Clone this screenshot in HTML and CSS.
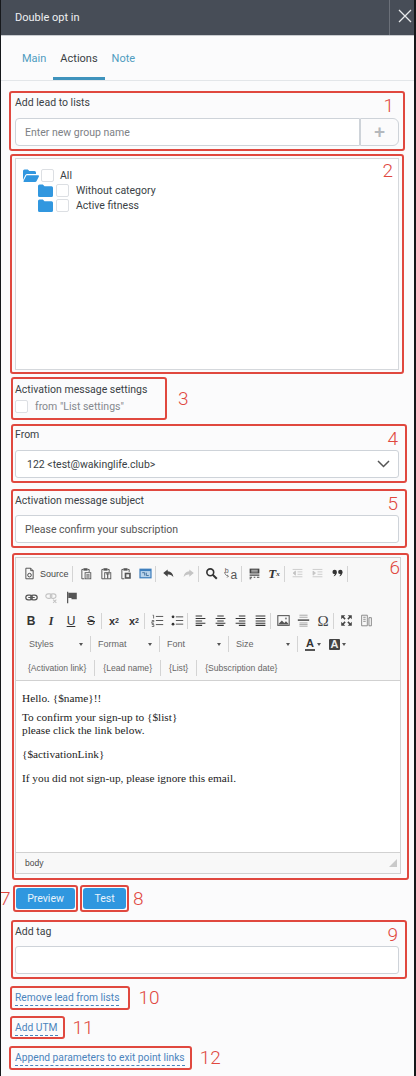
FILE: index.html
```html
<!DOCTYPE html>
<html lang="en">
<head>
    <meta charset="UTF-8">
    <meta name="viewport" content="width=device-width, initial-scale=1.0">
    <title>Double opt in</title>
    <link rel="stylesheet" href="styles.css">
</head>
<body>
    <svg class="sprite" width="0" height="0">
        <symbol id="i-source" viewBox="0 0 16 16"><path d="M3.5 1.5h6l3 3v10h-9z M9.5 1.5v3h3" fill="none" stroke="#444" stroke-width="1.1"/><circle cx="8" cy="10" r="2.2" fill="none" stroke="#444" stroke-width="1.2"/></symbol>
        <symbol id="i-paste" viewBox="0 0 16 16"><path d="M3.5 3h2M10.5 3h2v3M3.5 3v11.5h3" fill="none" stroke="#555" stroke-width="1.2"/><rect x="5.5" y="1.5" width="5" height="3" fill="#555"/><rect x="7.5" y="7" width="7" height="7.5" fill="none" stroke="#555" stroke-width="1.1"/><path d="M9 9.5h4M9 11h4M9 12.5h4" stroke="#555"/></symbol>
        <symbol id="i-paste2" viewBox="0 0 16 16"><path d="M3.5 3h2M10.5 3h2v3M3.5 3v11.5h3" fill="none" stroke="#555" stroke-width="1.2"/><rect x="5.5" y="1.5" width="5" height="3" fill="#555"/><rect x="7" y="7" width="7.5" height="7.5" fill="none" stroke="#555" stroke-width="1.1"/><path d="M10.7 8v6" stroke="#555" stroke-width="1.4"/><path d="M8.5 8.5h4.500" stroke="#555" stroke-width="1.200"/></symbol>
        <symbol id="i-paste3" viewBox="0 0 16 16"><path d="M3.5 3h2M10.5 3h2v3M3.500 3v11.500h3" fill="none" stroke="#555" stroke-width="1.2"/><rect x="5.5" y="1.5" width="5" height="3" fill="#555"/><rect x="7" y="7" width="7.5" height="7.500" fill="#555"/><rect x="9" y="9" width="3.500" height="3.500" fill="#eee"/></symbol>
        <symbol id="i-preview" viewBox="0 0 16 16"><rect x="0.500" y="2" width="15" height="12" fill="#3f7fbd"/><rect x="2" y="5" width="12" height="7.500" fill="#b9d3ea"/><path d="M4 7h3v3.500M9 7v3.500h3" fill="none" stroke="#2f5f8f"/></symbol>
        <symbol id="i-undo" viewBox="0 0 16 16"><path d="M7 3L1.500 7.500 7 12V9.200c3-.3 5.300.6 7 3.300-.3-4-2.800-6.800-7-7.200z" fill="#444"/></symbol>
        <symbol id="i-redo" viewBox="0 0 16 16"><path d="M9 3l5.500 4.500L9 12V9.200c-3-.3-5.300.6-7 3.300.3-4 2.800-6.800 7-7.200z" fill="#c4c4c4"/></symbol>
        <symbol id="i-search" viewBox="0 0 16 16"><circle cx="6.500" cy="6.500" r="4.200" fill="none" stroke="#333" stroke-width="2"/><path d="M9.500 9.500l5 5" stroke="#333" stroke-width="2.400"/></symbol>
        <symbol id="i-replace" viewBox="0 0 16 16"><path d="M2 5c.3 3 2 4.500 4.500 5M5 8.500l1.700 1.500L5 11.800" fill="none" stroke="#666"/></symbol>
        <symbol id="i-blocks" viewBox="0 0 16 16"><path d="M2 2h12v6H2z" fill="#444"/><path d="M2 10h12M2 12.500h3M7 12.500h2M11 12.500h3M2 14.500h2" stroke="#444" stroke-width="1.300"/><path d="M4 4h8M4 6h8" stroke="#ddd"/></symbol>
        <symbol id="i-outdent" viewBox="0 0 16 16"><path d="M2 3h12M8 6h6M8 9h6M2 12h12M5.500 5v5L2.500 7.500z" stroke="#c4c4c4" fill="#c4c4c4"/></symbol>
        <symbol id="i-indent" viewBox="0 0 16 16"><path d="M2 3h12M8 6h6M8 9h6M2 12h12M2.500 5v5l3-2.500z" stroke="#c4c4c4" fill="#c4c4c4"/></symbol>
        <symbol id="i-quote" viewBox="0 0 16 16"><circle cx="4.500" cy="6" r="2.700" fill="#333"/><path d="M7 6c0 3-1.500 5-4 5.500C4.500 10 5 8.500 5 7z" fill="#333"/><circle cx="11.500" cy="6" r="2.700" fill="#333"/><path d="M14 6c0 3-1.500 5-4 5.500 1.500-1.500 2-3 2-4.500z" fill="#333"/></symbol>
        <symbol id="i-link" viewBox="0 0 16 16"><rect x="1" y="5" width="8" height="6" rx="3" fill="none" stroke="#555" stroke-width="1.500"/><rect x="7" y="5" width="8" height="6" rx="3" fill="none" stroke="#555" stroke-width="1.500"/><path d="M4 8h8" stroke="#555" stroke-width="1.200"/></symbol>
        <symbol id="i-unlink" viewBox="0 0 16 16"><rect x="1" y="3.500" width="7.500" height="5.500" rx="2.700" fill="none" stroke="#c4c4c4" stroke-width="1.400"/><rect x="6.500" y="3.500" width="7" height="5.500" rx="2.700" fill="none" stroke="#c4c4c4" stroke-width="1.400"/><path d="M10 10.500l4 4M14 10.500l-4 4" stroke="#c4c4c4" stroke-width="1.300"/></symbol>
        <symbol id="i-flag" viewBox="0 0 16 16"><path d="M2.500 1h1.500v14H2.500z" fill="#555"/><path d="M4 2h10.500v8H8V8.500H4z" fill="#555"/></symbol>
        <symbol id="i-ol" viewBox="0 0 16 16"><path d="M6 3h9M6 8h9M6 13h9" stroke="#555" stroke-width="1.200"/><path d="M2 1.500h1.200v4M1 8h2.500v1.500H1v2h2.500M1 13h2.500v2.500H1" fill="none" stroke="#555"/></symbol>
        <symbol id="i-ul" viewBox="0 0 16 16"><path d="M6 3.500h9M6 8h9M6 12.500h9" stroke="#555" stroke-width="1.200"/><circle cx="2.500" cy="3.500" r="1.700" fill="#333"/><circle cx="2.500" cy="12.500" r="1.700" fill="#333"/></symbol>
        <symbol id="i-left" viewBox="0 0 16 16"><path d="M2 2.500h8M2 5.500h12M2 8.500h8M2 11.500h12M2 14h8" stroke="#333" stroke-width="1.300"/></symbol>
        <symbol id="i-center" viewBox="0 0 16 16"><path d="M4 2.500h8M2 5.500h12M4 8.500h8M2 11.500h12M4 14h8" stroke="#333" stroke-width="1.300"/></symbol>
        <symbol id="i-right" viewBox="0 0 16 16"><path d="M6 2.500h8M2 5.500h12M6 8.500h8M2 11.500h12M6 14h8" stroke="#333" stroke-width="1.300"/></symbol>
        <symbol id="i-justify" viewBox="0 0 16 16"><path d="M2 2.500h12M2 5.500h12M2 8.500h12M2 11.500h12M2 14h12" stroke="#333" stroke-width="1.300"/></symbol>
        <symbol id="i-image" viewBox="0 0 16 16"><rect x="1" y="2" width="14" height="12" fill="none" stroke="#555" stroke-width="1.300"/><path d="M2 12l4-4 3 3 2-2 3 3v1H2z" fill="#555"/><circle cx="11" cy="5.500" r="1.300" fill="#888"/></symbol>
        <symbol id="i-hr" viewBox="0 0 16 16"><path d="M3 1.500h10M3 4h10" stroke="#999"/><path d="M1 7.500h14" stroke="#333" stroke-width="1.600"/><path d="M3 11h10M3 13h10M3 15h10" stroke="#999"/></symbol>
        <symbol id="i-max" viewBox="0 0 16 16"><path d="M1.500 1.500h5l-1.800 1.800 2.300 2.300-1.400 1.400-2.300-2.300-1.800 1.800zM14.500 1.500v5l-1.800-1.800-2.300 2.300-1.400-1.400 2.300-2.300-1.800-1.800zM1.500 14.500v-5l1.800 1.800 2.300-2.300 1.400 1.400-2.300 2.300 1.800 1.800zM14.500 14.500h-5l1.800-1.800-2.300-2.300 1.400-1.400 2.300 2.300 1.800-1.800z" fill="#444"/></symbol>
        <symbol id="i-show" viewBox="0 0 16 16"><path d="M2 1.500h7v13H2zM11 4.500h3v10h-3z" fill="none" stroke="#777"/><path d="M4 4h3M4 6.500h3M4 9h3" stroke="#777"/></symbol>
        <symbol id="i-folder" viewBox="0 0 15 13"><path d="M0 2a1.500 1.500 0 0 1 1.500-1.500h3.300L6.500 2.300h7A1.500 1.500 0 0 1 15 3.800v7.700a1.500 1.500 0 0 1-1.500 1.500h-12A1.500 1.500 0 0 1 0 11.500z" fill="#3197df"/></symbol>
        <symbol id="i-folder-open" viewBox="0 0 16 13"><path d="M0 2a1.500 1.500 0 0 1 1.500-1.500h3.300L6.300 2h5.200A1.500 1.500 0 0 1 13 3.500V5H4.200a2 2 0 0 0-1.800 1.100L0 11z" fill="#3197df"/><path d="M3.500 6.300h11.700c.6 0 1 .6.700 1.100l-2.400 4.800a1.500 1.500 0 0 1-1.300.8H1.200c-.6 0-1-.6-.7-1.100z" fill="#3197df"/></symbol>
    </svg>

    <div class="header">
        <div class="header-title">Double opt in</div>
        <button class="close-btn" aria-label="Close">
            <svg width="14" height="14" viewBox="0 0 14 14"><path d="M1 1l12 12M13 1L1 13" stroke="#e8eaec" stroke-width="1.300"/></svg>
        </button>
    </div>

    <div class="tabs">
        <a class="tab">Main</a>
        <a class="tab active">Actions</a>
        <a class="tab">Note</a>
    </div>

    <div class="box box-lists">
        <span class="num">1</span>
        <label class="field-label">Add lead to lists</label>
        <div class="input-group">
            <input class="input" type="text" placeholder="Enter new group name">
            <button class="add-btn">+</button>
        </div>
    </div>

    <div class="box box-tree">
        <span class="num">2</span>
        <div class="tree">
            <div class="tree-row top">
                <svg class="folder-open"><use href="#i-folder-open"/></svg>
                <span class="check"></span>
                <span class="tree-name">All</span>
            </div>
            <div class="tree-row child">
                <svg class="folder"><use href="#i-folder"/></svg>
                <span class="check"></span>
                <span class="tree-name">Without category</span>
            </div>
            <div class="tree-row child">
                <svg class="folder"><use href="#i-folder"/></svg>
                <span class="check"></span>
                <span class="tree-name">Active fitness</span>
            </div>
        </div>
    </div>

    <div class="row-noted row-settings">
        <div class="box box-settings">
            <div class="settings-label">Activation message settings</div>
            <div class="settings-check">
                <span class="check"></span>
                <span class="settings-text">from "List settings"</span>
            </div>
        </div>
        <span class="num-side">3</span>
    </div>

    <div class="box box-field box-from">
        <span class="num">4</span>
        <label class="field-label">From</label>
        <div class="select">
            <span>122 &lt;test@wakinglife.club&gt;</span>
            <svg width="13" height="8" viewBox="0 0 13 8"><path d="M1 1l5.500 5.500L12 1" fill="none" stroke="#555" stroke-width="1.500"/></svg>
        </div>
    </div>

    <div class="box box-field box-subject">
        <span class="num">5</span>
        <label class="field-label">Activation message subject</label>
        <input class="input single" type="text" value="Please confirm your subscription">
    </div>

    <div class="box box-editor">
        <span class="num">6</span>
        <div class="editor">
            <div class="toolbar">
                <div class="tool-row">
                    <span class="tool source"><svg><use href="#i-source"/></svg><span>Source</span></span>
                    <i class="sep"></i>
                    <span class="tool"><svg><use href="#i-paste"/></svg></span>
                    <span class="tool"><svg><use href="#i-paste2"/></svg></span>
                    <span class="tool"><svg><use href="#i-paste3"/></svg></span>
                    <span class="tool"><svg><use href="#i-preview"/></svg></span>
                    <i class="sep"></i>
                    <span class="tool"><svg><use href="#i-undo"/></svg></span>
                    <span class="tool"><svg><use href="#i-redo"/></svg></span>
                    <i class="sep"></i>
                    <span class="tool"><svg><use href="#i-search"/></svg></span>
                    <span class="tool replace"><svg><use href="#i-replace"/></svg><sup>b</sup><span>a</span></span>
                    <i class="sep"></i>
                    <span class="tool"><svg><use href="#i-blocks"/></svg></span>
                    <span class="tool clear">T<sub>x</sub></span>
                    <i class="sep"></i>
                    <span class="tool"><svg><use href="#i-outdent"/></svg></span>
                    <span class="tool"><svg><use href="#i-indent"/></svg></span>
                    <span class="tool"><svg><use href="#i-quote"/></svg></span>
                    <i class="sep"></i>
                </div>
                <div class="tool-row">
                    <span class="tool"><svg><use href="#i-link"/></svg></span>
                    <span class="tool"><svg><use href="#i-unlink"/></svg></span>
                    <span class="tool"><svg><use href="#i-flag"/></svg></span>
                </div>
                <div class="tool-row">
                    <span class="tool fmt bold">B</span>
                    <span class="tool fmt italic">I</span>
                    <span class="tool fmt under">U</span>
                    <span class="tool fmt strike">S</span>
                    <i class="sep"></i>
                    <span class="tool fmt script">x<sub>2</sub></span>
                    <span class="tool fmt script">x<sup>2</sup></span>
                    <i class="sep"></i>
                    <span class="tool"><svg><use href="#i-ol"/></svg></span>
                    <span class="tool"><svg><use href="#i-ul"/></svg></span>
                    <i class="sep"></i>
                    <span class="tool"><svg><use href="#i-left"/></svg></span>
                    <span class="tool"><svg><use href="#i-center"/></svg></span>
                    <span class="tool"><svg><use href="#i-right"/></svg></span>
                    <span class="tool"><svg><use href="#i-justify"/></svg></span>
                    <i class="sep"></i>
                    <span class="tool"><svg><use href="#i-image"/></svg></span>
                    <span class="tool"><svg><use href="#i-hr"/></svg></span>
                    <span class="tool omega">&Omega;</span>
                    <i class="sep"></i>
                    <span class="tool"><svg><use href="#i-max"/></svg></span>
                    <span class="tool"><svg><use href="#i-show"/></svg></span>
                </div>
                <div class="tool-row combos">
                    <span class="combo"><span>Styles</span><b class="caret"></b></span>
                    <i class="sep"></i>
                    <span class="combo"><span>Format</span><b class="caret"></b></span>
                    <i class="sep"></i>
                    <span class="combo"><span>Font</span><b class="caret"></b></span>
                    <i class="sep"></i>
                    <span class="combo"><span>Size</span><b class="caret"></b></span>
                    <i class="sep"></i>
                    <span class="color-btn"><span class="text-color">A</span><b class="caret"></b></span>
                    <span class="color-btn"><span class="bg-color">A</span><b class="caret"></b></span>
                </div>
                <div class="tool-row vars">
                    <span>{Activation link}</span>
                    <i class="sep"></i>
                    <span>{Lead name}</span>
                    <i class="sep"></i>
                    <span>{List}</span>
                    <i class="sep"></i>
                    <span>{Subscription date}</span>
                </div>
            </div>
            <div class="editor-body">
                <p>Hello. {$name}!!</p>
                <p>To confirm your sign-up to {$list}<br>please click the link below.</p>
                <p class="gap">{$activationLink}</p>
                <p class="gap">If you did not sign-up, please ignore this email.</p>
            </div>
            <div class="editor-foot">
                <span>body</span>
                <svg width="8" height="8" viewBox="0 0 8 8"><path d="M8 0v8H0z" fill="#c9c9c9"/></svg>
            </div>
        </div>
    </div>

    <div class="row-noted row-buttons">
        <span class="num-side num-seven">7</span>
        <div class="box box-btn box-preview"><button class="btn">Preview</button></div>
        <div class="box box-btn box-test"><button class="btn">Test</button></div>
        <span class="num-side">8</span>
    </div>

    <div class="box box-field box-tag">
        <span class="num">9</span>
        <label class="field-label">Add tag</label>
        <input class="input single" type="text">
    </div>

    <div class="row-noted row-link row-remove">
        <div class="box box-link"><a class="dash-link">Remove lead from lists</a></div>
        <span class="num-side">10</span>
    </div>
    <div class="row-noted row-link row-utm">
        <div class="box box-link"><a class="dash-link">Add UTM</a></div>
        <span class="num-side">11</span>
    </div>
    <div class="row-noted row-link row-append">
        <div class="box box-link"><a class="dash-link">Append parameters to exit point links</a></div>
        <span class="num-side">12</span>
    </div>
</body>
</html>
```

FILE: styles.css
```css
* {
    box-sizing: border-box;
}
body {
    margin: 0;
    width: 416px;
    height: 1076px;
    overflow: hidden;
    border-left: 1px solid #16181b;
    border-right: 2px solid #16181b;
    background-color: #fbfbfc;
    color: #3a3f45;
    font-family: Roboto, 'Open Sans', sans-serif;
    font-size: 10.5px;
}
.sprite {
    position: absolute;
}

/* header */
.header {
    display: flex;
    justify-content: space-between;
    height: 36px;
    background-color: #474d57;
    border-bottom: 1px solid #c9ccd0;
}
.header-title {
    padding-left: 14px;
    line-height: 35px;
    font-size: 11px;
    color: #eef0f2;
}
.close-btn {
    width: 25px;
    padding: 0 0 0 5px;
    background: none;
    border: none;
    border-left: 1px solid #6b7079;
}

/* tabs */
.tabs {
    display: flex;
    height: 45px;
    padding-left: 14px;
    border-bottom: 1px solid #e3e6e9;
}
.tab {
    padding: 16px 7px 0;
    font-size: 11px;
    color: #4f9cc0;
}
.tab.active {
    color: #3a3f45;
    border-bottom: 3px solid #3f93bd;
}

/* numbered boxes */
.box {
    position: relative;
    border: 2px solid #e0483f;
    border-radius: 3px;
}
.num {
    position: absolute;
    top: 3px;
    right: 7px;
    color: #e0483f;
    font-size: 19px;
    font-weight: 300;
    line-height: 20px;
}
.box-lists .num {
    right: 9px;
}
.box-tree .num {
    top: 5px;
    right: 9px;
}
.num-side {
    color: #e0483f;
    font-size: 19px;
    font-weight: 300;
    line-height: 20px;
}
.field-label {
    display: block;
    height: 24px;
    line-height: 18px;
    color: #3a3f45;
}
.input {
    flex: 1;
    min-width: 0;
    height: 28px;
    padding: 0 9px;
    background-color: #fff;
    border: 1px solid #ced3d9;
    border-radius: 4px 0 0 4px;
    font: inherit;
    color: #555;
}
.input::placeholder {
    color: #7d8186;
    opacity: 1;
}
.input.single {
    display: block;
    width: 100%;
    border-radius: 3px;
}

.box-lists {
    width: 396px;
    height: 60px;
    margin: 10px 0 0 8px;
    padding: 1px 4px 0;
}
.input-group {
    display: flex;
}
.add-btn {
    width: 39px;
    height: 28px;
    padding: 0;
    background-color: #fbfbfc;
    border: 1px solid #ced3d9;
    border-radius: 0 6px 6px 0;
    color: #b4b8bd;
    font-size: 19px;
    font-weight: 700;
    line-height: 24px;
}

.box-tree {
    width: 394px;
    height: 220px;
    margin: 3px 0 0 9px;
    padding: 2px 3px;
}
.tree {
    height: 212px;
    width: 384px;
    padding: 9px 7px;
    background-color: #fff;
    border: 1px solid #d5d8dc;
}
.tree-row {
    display: flex;
    align-items: center;
    height: 15px;
}
.tree-row.child {
    padding-left: 15px;
}
.folder-open {
    width: 16px;
    height: 13px;
}
.folder {
    width: 15px;
    height: 13px;
}
.check {
    display: block;
    flex: none;
    width: 13px;
    height: 13px;
    background-color: #fff;
    border: 1px solid #dcdfe3;
    border-radius: 2px;
}
.tree-row .check {
    margin-left: 3px;
}
.tree-row.top .check {
    margin-left: 2px;
}
.tree-name {
    margin-left: 7px;
}
.tree-row.top .tree-name {
    margin-left: 6px;
}

.row-noted {
    display: flex;
    align-items: center;
}
.row-settings {
    margin: 3px 0 0 10px;
    gap: 11px;
}
.box-settings {
    width: 156px;
    height: 43px;
    padding: 3px 2px 0;
}
.settings-label {
    line-height: 16px;
}
.settings-check {
    display: flex;
    align-items: center;
    gap: 7px;
    margin-top: 2px;
}
.settings-text {
    color: #85898e;
}

.box-field {
    width: 396px;
    height: 59px;
    padding: 1px 6px 0 2px;
}
.box-field .field-label {
    height: 23px;
}
.box-from {
    margin: 4px 0 0 10px;
    padding-top: 0;
}
.box-from .field-label {
    height: 24px;
}
.box-subject {
    margin: 6px 0 0 10px;
}
.box-tag {
    margin: 8px 0 0 10px;
}
.select {
    display: flex;
    align-items: center;
    justify-content: space-between;
    height: 28px;
    padding: 0 8px 0 11px;
    background-color: #fff;
    border: 1px solid #ced3d9;
    border-radius: 3px;
    color: #3a3f45;
}

/* editor */
.box-editor {
    width: 397px;
    height: 327px;
    margin: 5px 0 0 11px;
    padding: 2px 1px;
}
.editor {
    display: flex;
    flex-direction: column;
    width: 386px;
    height: 317px;
    border: 1px solid #d1d1d1;
    background-color: #f8f8f8;
    color: #474747;
    font-family: 'Liberation Sans', sans-serif;
}
.toolbar {
    height: 123px;
    padding: 4px 0 0 5px;
    border-bottom: 1px solid #d1d1d1;
}
.tool-row {
    display: flex;
    align-items: center;
    height: 23.500px;
}
.tool {
    display: flex;
    align-items: center;
    justify-content: center;
    width: 20px;
    height: 16px;
    font-size: 13px;
    line-height: 16px;
}
.tool svg {
    width: 13px;
    height: 13px;
}
.tool.source {
    width: 51px;
    justify-content: flex-start;
    gap: 4px;
    font-size: 9px;
    padding-left: 2px;
}
.sep {
    display: block;
    flex: none;
    width: 1px;
    height: 16px;
    margin: 0 2px 0 0;
    background-color: #d4d4d4;
}
.replace {
    position: relative;
    font-size: 12px;
    color: #555;
}
.replace svg {
    position: absolute;
    left: 2px;
    top: 2px;
}
.replace sup {
    font-size: 7px;
    line-height: 0;
    margin: -5px 2px 0 0;
}
.replace span {
    margin-top: 2px;
}
.clear {
    font-family: 'Liberation Serif', serif;
    font-style: italic;
    font-weight: 700;
    color: #333;
}
.clear sub, .script sub, .script sup {
    font-size: 7px;
    line-height: 0;
}
.fmt {
    color: #333;
    font-size: 12px;
}
.bold {
    font-weight: 700;
}
.italic {
    font-family: 'Liberation Serif', serif;
    font-style: italic;
    font-weight: 700;
}
.under {
    text-decoration: underline;
}
.strike {
    text-decoration: line-through;
}
.script {
    font-weight: 700;
    font-size: 11px;
}
.omega {
    font-family: 'Liberation Serif', serif;
    font-size: 15px;
    color: #444;
}
.combos {
    padding-left: 8px;
    font-size: 9px;
    color: #666;
}
.combo {
    display: flex;
    align-items: center;
    justify-content: space-between;
    width: 61px;
    padding-right: 7px;
}
.combos .sep {
    margin: 0 7px 0 0;
}
.caret {
    display: block;
    width: 0;
    height: 0;
    border-left: 2.500px solid transparent;
    border-right: 2.500px solid transparent;
    border-top: 3px solid #555;
}
.color-btn {
    display: flex;
    align-items: center;
    gap: 2px;
    width: 24px;
    font-size: 11px;
    font-weight: 700;
    color: #333;
}
.text-color {
    border-bottom: 2px solid #555;
    line-height: 12px;
    padding: 0 1px;
}
.bg-color {
    background-color: #444;
    color: #eee;
    line-height: 11px;
    padding: 0 1.500px;
    border-radius: 1px;
}
.vars {
    gap: 8px;
    padding-left: 7px;
    font-size: 8.600px;
    color: #666;
}
.vars .sep {
    margin: 0;
}
.editor-body {
    flex: 1;
    padding: 11px 6px;
    background-color: #fff;
    font-family: 'Liberation Serif', serif;
    font-size: 11.300px;
    line-height: 13px;
    color: #222;
}
.editor-body p {
    margin: 0 0 6px;
}
.editor-body p.gap {
    margin-top: 11px;
    margin-bottom: 11px;
}
.editor-foot {
    display: flex;
    align-items: center;
    justify-content: space-between;
    height: 21px;
    padding: 0 3px 0 9px;
    border-top: 1px solid #d1d1d1;
    font-size: 8.500px;
    color: #484848;
}

/* buttons */
.row-buttons {
    margin: 5px 0 0 0;
    gap: 2px;
}
.num-seven {
    width: 10px;
    margin-left: -1px;
    margin-right: 1px;
}
.box-btn {
    height: 27px;
    padding: 1px;
}
.box-preview {
    width: 65px;
}
.box-test {
    width: 49px;
}
.row-buttons .num-side:last-child {
    margin-left: 2px;
}
.btn {
    display: block;
    width: 100%;
    height: 21px;
    padding: 0;
    background-color: #2f97df;
    border: none;
    border-radius: 3px;
    color: #e8f3fb;
    font: inherit;
}

/* links */
.row-link {
    gap: 8px;
}
.row-remove {
    margin: 7px 0 0 9px;
}
.row-utm {
    margin: 6px 0 0 9px;
}
.row-utm .box-link {
    height: 23px;
}
.row-append {
    margin: 7px 0 0 8px;
}
.box-link {
    height: 24px;
    padding: 2px 5px 0 3px;
    line-height: 16px;
    font-size: 10.250px;
}
.row-remove .box-link {
    padding-right: 9px;
}
.row-append .box-link {
    padding-left: 4px;
}
.dash-link {
    display: inline-block;
    color: #4b84bd;
    border-bottom: 1px dashed #4b84bd;
    line-height: 14px;
}
```
